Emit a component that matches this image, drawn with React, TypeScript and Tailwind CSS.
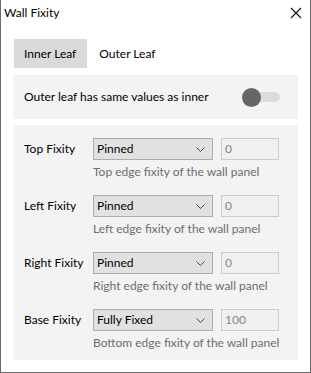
import React from 'react';

const rows = [
  { label: 'Top Fixity', value: 'Pinned', num: '0', help: 'Top edge fixity of the wall panel' },
  { label: 'Left Fixity', value: 'Pinned', num: '0', help: 'Left edge fixity of the wall panel' },
  { label: 'Right Fixity', value: 'Pinned', num: '0', help: 'Right edge fixity of the wall panel' },
  { label: 'Base Fixity', value: 'Fully Fixed', num: '100', help: 'Bottom edge fixity of the wall panel' },
];

const Chevron = () => (
  <svg width="9" height="5" viewBox="0 0 9 5" fill="none">
    <path d="M0.5 0.5 L4.5 4.5 L8.5 0.5" stroke="#444" strokeWidth="1" />
  </svg>
);

const App = () => {
  return (
    <div
      className="w-[311px] h-[373px] bg-white text-black text-[12px] flex flex-col border-l border-r border-b border-[#6b6b6b] overflow-hidden"
      style={{ fontFamily: '"Segoe UI", Lato, "Liberation Sans", sans-serif' }}
    >
      {/* Title bar */}
      <div className="h-[30px] flex items-start justify-between pl-[3px] pr-[8px] pt-[5px]">
        <span className="text-[12px] leading-[16px]">Wall Fixity</span>
        <svg width="12" height="12" viewBox="0 0 12 12" className="mt-[2px]">
          <path d="M1 1 L11 11 M11 1 L1 11" stroke="#111" strokeWidth="1.1" />
        </svg>
      </div>

      {/* Tabs */}
      <div className="flex ml-[13px] mt-[9px] h-[29px] whitespace-nowrap">
        <div className="bg-[#dadada] pl-[10px] pr-[11px] flex items-center">Inner Leaf</div>
        <div className="px-[12px] flex items-center">Outer Leaf</div>
      </div>

      {/* Same values panel */}
      <div className="mx-[12px] mt-[7px] h-[44px] bg-[#f3f3f3] flex items-center justify-between pl-[11px] pr-[18px]">
        <span>Outer leaf has same values as inner</span>
        <div className="relative w-[38px] h-[20px] flex items-center">
          <div className="absolute left-[6px] right-0 h-[10px] rounded-full bg-[#dcdcdc]" />
          <div className="absolute left-0 w-[19px] h-[19px] rounded-full bg-[#666666]" />
        </div>
      </div>

      {/* Fixity panel */}
      <div className="mx-[12px] mt-[6px] bg-[#f3f3f3] pt-[13px] pb-[9px] pl-[11px] flex flex-col gap-[15px]">
        {rows.map((r) => (
          <div key={r.label} className="flex">
            <div className="w-[69px] h-[22px] flex items-center">{r.label}</div>
            <div className="flex flex-col">
              <div className="flex gap-[8px]">
                <div className="w-[120px] h-[22px] bg-[#e1e1e1] border border-[#adadad] flex items-center justify-between pl-[3px] pr-[7px]">
                  <span>{r.value}</span>
                  <Chevron />
                </div>
                <div className="w-[58px] h-[22px] bg-[#f0f0f0] border border-[#cccccc] flex items-center pl-[3px] text-[#7a8896]">
                  {r.num}
                </div>
              </div>
              <div className="mt-[4px] h-[16px] leading-[16px] text-[#6d6d6d]">{r.help}</div>
            </div>
          </div>
        ))}
      </div>
    </div>
  );
};

export default App;
